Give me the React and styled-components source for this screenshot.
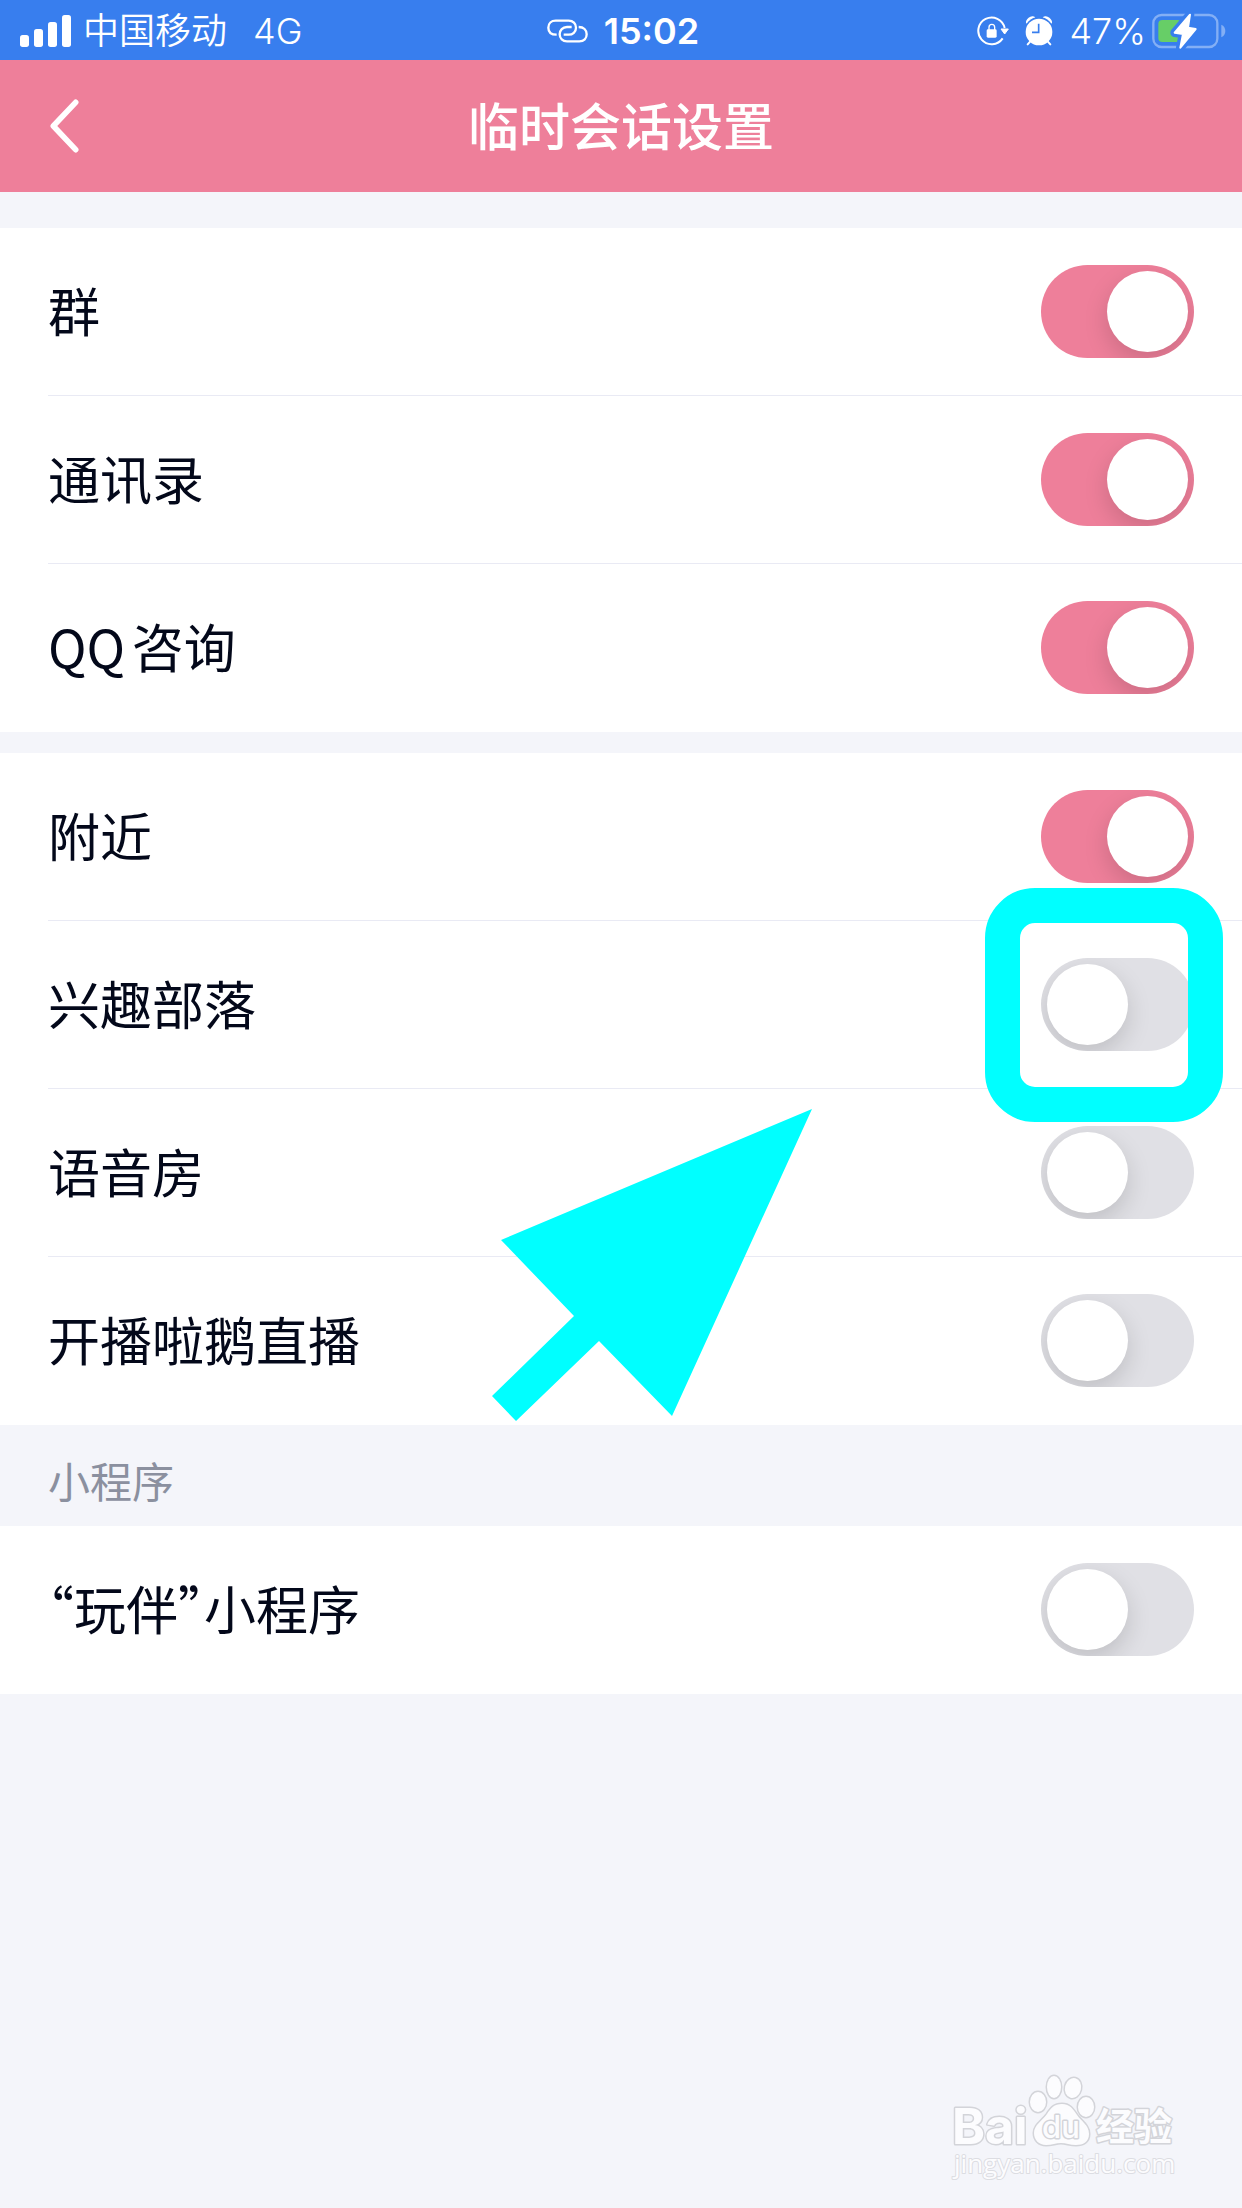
import React, { useState } from 'react';
import styled, { createGlobalStyle } from 'styled-components';

const colours = {
	blue: '#387eee',
	pink: '#ee7f9a',
	page: '#f4f5fa',
	white: '#ffffff',
	line: '#e9eaf4',
	text: '#03081a',
	muted: '#8b909f',
	off: '#e0e0e5',
	marker: '#00ffff',
	charge: '#67ce67',
}

const GlobalStyle = createGlobalStyle`
	*{
		box-sizing: border-box;
	}
	body{
		margin: 0;
		background: ${colours.page};
		color: ${colours.text};
		font-family: 'Noto Sans CJK SC', sans-serif;
	}
`

const Page = styled.div`
	position: relative;
	display: flex;
	flex-direction: column;
	min-height: 100vh;
	overflow: hidden;
`

const StatusBar = styled.div`
	display: grid;
	grid-template-columns: 1fr auto 1fr;
	align-items: center;
	height: 60px;
	padding: 2px 16px 0 20px;
	background: ${colours.blue};
	color: ${colours.white};
	font-family: 'Inter', 'Noto Sans CJK SC', sans-serif;
	font-size: 36px;
	line-height: 58px;
	font-weight: 350;
	svg{
		display: block;
		flex: none;
	}
`

const StatusGroup = styled.div`
	display: flex;
	align-items: center;
	justify-content: ${props => props.$align || 'flex-start'};
	gap: ${props => props.$gap}px;
`

const Network = styled.span`
	margin-left: 14px;
`

const Clock = styled.span`
	font-weight: 600;
`

const NavBar = styled.header`
	display: grid;
	grid-template-columns: 96px 1fr 96px;
	align-items: center;
	height: 132px;
	background: ${colours.pink};
	color: ${colours.white};
	h1{
		margin: 0;
		padding-bottom: 4px;
		font-size: 51px;
		line-height: 72px;
		font-weight: 500;
		text-align: center;
	}
`

const BackButton = styled.button`
	display: flex;
	justify-content: flex-end;
	padding: 24px 16px;
	border: 0;
	background: none;
	color: inherit;
`

const Settings = styled.main`
	display: flex;
	flex-direction: column;
	padding-top: 36px;
`

const Group = styled.section`
	background: ${colours.white};
	& + &{
		margin-top: 21px;
	}
`

const GroupTitle = styled.h2`
	margin: 0;
	padding: 25px 48px 16px;
	color: ${colours.muted};
	font-size: 42px;
	line-height: 60px;
	font-weight: 400;
`

const Row = styled.div`
	position: relative;
	margin-left: 48px;
	display: flex;
	align-items: center;
	justify-content: space-between;
	height: 168px;
	padding-right: 48px;
	border-bottom: 1px solid ${colours.line};
	&:last-child{
		border-bottom-color: transparent;
	}
	label{
		flex: 1;
		padding-bottom: 4px;
		font-size: 52px;
		line-height: 72px;
		text-autospace: normal;
		font-feature-settings: 'halt';
	}
`

const Switch = styled.input`
	appearance: none;
	flex: none;
	display: flex;
	width: 153px;
	height: 93px;
	margin: 0;
	padding: 6px;
	border-radius: 47px;
	background: ${colours.off};
	overflow: hidden;
	&::before{
		content: '';
		width: 81px;
		height: 81px;
		border-radius: 50%;
		background: ${colours.white};
		box-shadow: 0 9px 24px rgba(0, 0, 0, 0.15);
	}
	&:checked{
		justify-content: flex-end;
		background: ${colours.pink};
	}
`

const Highlight = styled.div`
	position: absolute;
	z-index: 1;
	top: -33px;
	right: 19px;
	width: 238px;
	height: 234px;
	border: 35px solid ${colours.marker};
	border-radius: 50px;
	pointer-events: none;
`

const Pointer = styled.svg`
	position: absolute;
	z-index: 1;
	top: 19px;
	right: 429px;
	width: 321px;
	height: 314px;
	pointer-events: none;
`

const Watermark = styled.svg`
	position: absolute;
	right: 62px;
	bottom: 16px;
	width: 232px;
	height: 120px;
`

const SignalIcon = () => (
	<svg width="51" height="32" viewBox="60 42 153 96" fill="currentColor">
		<rect x="60" y="102" width="27" height="36" rx="8" />
		<rect x="102" y="84" width="27" height="54" rx="8" />
		<rect x="144" y="63" width="27" height="75" rx="8" />
		<rect x="186" y="42" width="27" height="96" rx="8" />
	</svg>
)

const LinkIcon = () => (
	<svg width="41" height="24" viewBox="373 59 123 72" fill="none" stroke="currentColor" strokeWidth="7">
		<path d="M402 106C385 106 377 97 377 85C377 72 386 64 399 64H438C451 64 460 73 460 85C460 98 450 106 438 106H423" />
		<path d="M447 83H433C420 83 411 93 411 105C411 117 420 126 433 126H470C484 126 492 117 492 105C492 92 483 83 468 83" />
	</svg>
)

const RotationLockIcon = () => (
	<svg width="32" height="30" viewBox="112 50 96 90" fill="none" stroke="currentColor">
		<path d="M195 86A40 40 0 1 0 189 117" strokeWidth="6" />
		<path d="M184 89H206L195 104Z" fill="currentColor" strokeWidth="3" strokeLinejoin="round" />
		<path d="M148 92V84C148 72 165 72 165 84V92" strokeWidth="4" />
		<rect x="141" y="90" width="30" height="25" rx="4" fill="currentColor" stroke="none" />
	</svg>
)

const AlarmIcon = () => (
	<svg width="28" height="30" viewBox="262 47 84 90" fill="currentColor">
		<ellipse cx="279" cy="60" rx="16" ry="10" transform="rotate(-38 279 60)" />
		<ellipse cx="329" cy="60" rx="16" ry="10" transform="rotate(38 329 60)" />
		<circle cx="304" cy="95" r="45" fill={colours.blue} />
		<path d="M280 121L270 132M328 121L338 132" stroke="currentColor" strokeWidth="6" strokeLinecap="round" />
		<circle cx="304" cy="95" r="40" />
		<path d="M303 70V96H283" fill="none" stroke={colours.blue} strokeWidth="5" />
	</svg>
)

const BatteryIcon = () => (
	<svg width="74" height="36" viewBox="638 36 222 108">
		<rect x="642" y="42" width="192" height="96" rx="25" fill="none" stroke="#83aff5" strokeWidth="7" />
		<path d="M846 71C862 77 862 103 846 109Z" fill="#83aff5" />
		<rect x="657" y="57" width="69" height="66" rx="12" fill={colours.charge} />
		<path
			d="M752 41L706 95L731 99L723 140L769 84L746 80Z"
			fill={colours.blue}
			stroke={colours.blue}
			strokeWidth="26"
			strokeLinejoin="round"
		/>
		<path
			d="M752 41L706 95L731 99L723 140L769 84L746 80Z"
			fill="currentColor"
			stroke="currentColor"
			strokeWidth="6"
			strokeLinejoin="round"
		/>
	</svg>
)

const BackIcon = () => (
	<svg width="30" height="54" viewBox="151 295 90 162" fill="none" stroke="currentColor" strokeWidth="17" strokeLinecap="round" strokeLinejoin="round">
		<path d="M228 305L161 376L228 447" />
	</svg>
)

const BaiduLogo = () => (
	<Watermark viewBox="948 2072 232 120" fill="#fcfcfe" stroke="#d3d4d9" strokeWidth="3" paintOrder="stroke" strokeLinejoin="round">
		<text x="952" y="2144" fontFamily="Inter, sans-serif" fontWeight="700" fontSize="50">Bai</text>
		<ellipse cx="1038" cy="2102" rx="8" ry="10" />
		<ellipse cx="1054" cy="2087" rx="7" ry="11" />
		<ellipse cx="1073" cy="2088" rx="8" ry="10" transform="rotate(14 1073 2088)" />
		<ellipse cx="1086" cy="2107" rx="8" ry="10" />
		<path d="M1062 2104C1070 2104 1073 2109 1077 2115C1081 2121 1089 2125 1089 2134C1089 2142 1083 2145 1076 2145C1070 2145 1066 2143 1061 2143C1056 2143 1052 2145 1046 2145C1039 2145 1034 2140 1034 2133C1034 2125 1042 2121 1047 2114C1051 2108 1054 2104 1062 2104Z" />
		<text x="1042" y="2138" fontFamily="Inter, sans-serif" fontWeight="500" fontSize="31">du</text>
		<text x="1096" y="2140" fontFamily="'Noto Sans CJK SC', sans-serif" fontWeight="700" fontSize="38">经验</text>
		<text x="954" y="2173" fontFamily="'Open Sans', sans-serif" fontSize="26" strokeWidth="2" stroke="#dcdde2">jingyan.baidu.com</text>
	</Watermark>
)

const PointerArrow = () => (
	<Pointer viewBox="492 1108 321 314" fill={colours.marker}>
		<path d="M812 1109L501 1240L574 1316L492 1396L516 1421L599 1341L672 1416Z" />
	</Pointer>
)

const groups = [
	{
		items: [
			{ id: 'group', label: '群', on: true },
			{ id: 'contacts', label: '通讯录', on: true },
			{ id: 'consult', label: 'QQ咨询', on: true },
		],
	},
	{
		items: [
			{ id: 'nearby', label: '附近', on: true },
			{ id: 'tribe', label: '兴趣部落', on: false, overlay: <Highlight /> },
			{ id: 'voice', label: '语音房', on: false, overlay: <PointerArrow /> },
			{ id: 'live', label: '开播啦鹅直播', on: false },
		],
	},
	{
		title: '小程序',
		items: [
			{ id: 'mini', label: '“玩伴”小程序', on: false },
		],
	},
]

const SettingRow = ({ item }) => {
	const [on, setOn] = useState(item.on)

	return (
		<Row>
			<label htmlFor={item.id}>{item.label}</label>
			<Switch id={item.id} type="checkbox" checked={on} onChange={() => setOn(!on)} />
			{item.overlay}
		</Row>
	)
}

const App = () => (
	<Page>
		<GlobalStyle />
		<StatusBar>
			<StatusGroup $gap={12}>
				<SignalIcon />
				<span>中国移动</span>
				<Network>4G</Network>
			</StatusGroup>
			<StatusGroup $gap={16}>
				<LinkIcon />
				<Clock>15:02</Clock>
			</StatusGroup>
			<StatusGroup $gap={6} $align="flex-end">
				<StatusGroup $gap={16}>
					<RotationLockIcon />
					<AlarmIcon />
					<span>47%</span>
				</StatusGroup>
				<BatteryIcon />
			</StatusGroup>
		</StatusBar>
		<NavBar>
			<BackButton aria-label="返回">
				<BackIcon />
			</BackButton>
			<h1>临时会话设置</h1>
		</NavBar>
		<Settings>
			{groups.map((group, index) => (
				<React.Fragment key={index}>
					{group.title && <GroupTitle>{group.title}</GroupTitle>}
					<Group>
						{group.items.map(item => <SettingRow key={item.id} item={item} />)}
					</Group>
				</React.Fragment>
			))}
		</Settings>
		<BaiduLogo />
	</Page>
);

export default App;
